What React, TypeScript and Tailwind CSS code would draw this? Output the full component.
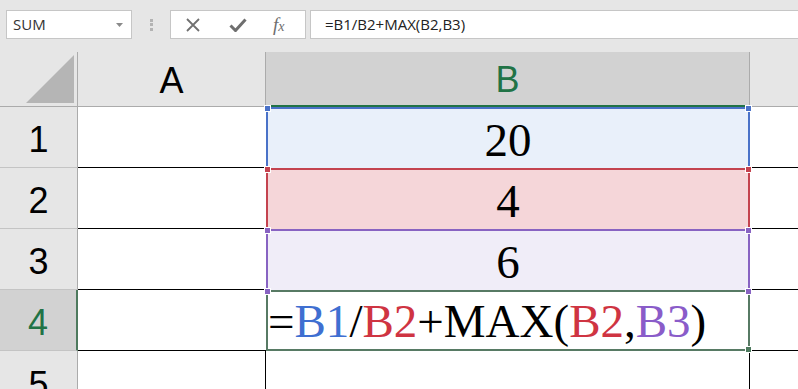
import React from 'react';

const sans = { fontFamily: '"Liberation Sans", Arial, sans-serif' };
const ui = { fontFamily: '"Open Sans", "Noto Sans", sans-serif' };
const serif = { fontFamily: '"Liberation Serif", "Times New Roman", serif' };

const Handle = ({ color, pos }: { color: string; pos: string }) => (
  <span className={`absolute z-10 w-[7px] h-[7px] border border-white ${color} ${pos}`} />
);

const RowHeader = ({ n, active }: { n: string; active?: boolean }) => (
  <div
    className={`h-[61px] flex items-center justify-center pt-[6px] text-[36px] border-b border-[#c4c4c4] ${
      active ? 'bg-[#d2d2d2] text-[#217346] border-r-2 border-r-[#4e7a5e]' : 'bg-[#e6e6e6] text-black border-r border-r-[#ababab]'
    }`}
    style={sans}
  >
    {n}
  </div>
);

const App = () => {
  return (
    <div className="w-[798px] h-[389px] overflow-hidden bg-[#e6e6e6] flex flex-col">
      {/* formula bar */}
      <div className="h-[52px] shrink-0 flex items-start pt-[10px] pl-[6px]" style={ui}>
        <div className="w-[126px] h-[29px] bg-white border border-[#c6c6c6] flex items-center justify-between pl-[6px] pr-[8px]">
          <span className="text-[15px] text-[#333]">SUM</span>
          <svg width="7" height="4" viewBox="0 0 7 4">
            <path d="M0 0 L7 0 L3.5 4 Z" fill="#8a8a8a" />
          </svg>
        </div>
        <div className="w-[38px] h-[29px] flex flex-col items-center justify-center gap-[1.5px]">
          <span className="w-[3px] h-[3px] bg-[#b3b3b3]" />
          <span className="w-[3px] h-[3px] bg-[#b3b3b3]" />
          <span className="w-[3px] h-[3px] bg-[#b3b3b3]" />
        </div>
        <div className="w-[136px] h-[29px] bg-white border border-[#c6c6c6] flex items-center pl-[14px] gap-[0px]">
          <svg width="16" height="14" viewBox="0 0 16 14" className="mr-[28px]">
            <path d="M2 1 L14 13 M14 1 L2 13" stroke="#707070" strokeWidth="1.8" fill="none" />
          </svg>
          <svg width="18" height="14" viewBox="0 0 18 14" className="mr-[26px]">
            <path d="M1.5 7.5 L6.5 12.5 L16.5 1.5" stroke="#6e6e6e" strokeWidth="3" fill="none" />
          </svg>
          <span className="italic text-[19px] leading-none text-[#6e6e6e]" style={serif}>
            f<span className="text-[14px]">x</span>
          </span>
        </div>
        <div className="ml-[4px] flex-1 h-[29px] bg-white border-y border-l border-[#c6c6c6] flex items-center pl-[14px]">
          <span className="text-[15px] text-[#222]">=B1/B2+MAX(B2,B3)</span>
        </div>
      </div>

      {/* sheet */}
      <div className="grid grid-cols-[78px_188px_484px_48px]">
        {/* headers */}
        <div className="h-[55px] border-r border-b border-[#ababab] flex items-end justify-end pr-[3px] pb-[3px]">
          <svg width="48" height="48" viewBox="0 0 48 48">
            <path d="M0 48 L48 0 L48 48 Z" fill="#b5b5b5" />
          </svg>
        </div>
        <div className="h-[55px] border-r border-b border-[#ababab] flex items-center justify-center pt-[3px] text-[36px]" style={sans}>
          A
        </div>
        <div className="h-[55px] bg-[#d2d2d2] border-r border-r-[#ababab] border-b-2 border-b-[#217346] flex items-center justify-center pt-[3px] text-[36px] text-[#217346]" style={sans}>
          B
        </div>
        <div className="h-[55px] border-b border-[#ababab]" />

        {/* row 1 */}
        <RowHeader n="1" />
        <div className="h-[61px] bg-white border-b border-black" />
        <div className="relative h-[61px] bg-[#e9f0fa] border-x-2 border-t-2 border-[#4a72c8] flex items-center justify-center pt-[4px] text-[47px]" style={serif}>
          <Handle color="bg-[#4a72c8]" pos="-top-[4px] -left-[4px]" />
          <Handle color="bg-[#4a72c8]" pos="-top-[4px] -right-[4px]" />
          20
        </div>
        <div className="h-[61px] bg-white border-b border-black" />

        {/* row 2 */}
        <RowHeader n="2" />
        <div className="h-[61px] bg-white border-b border-black" />
        <div className="relative h-[61px] bg-[#f5d6d9] border-x-2 border-t-2 border-[#c4434f] flex items-center justify-center pt-[4px] text-[47px]" style={serif}>
          <Handle color="bg-[#c4434f]" pos="-top-[4px] -left-[4px]" />
          <Handle color="bg-[#c4434f]" pos="-top-[4px] -right-[4px]" />
          4
        </div>
        <div className="h-[61px] bg-white border-b border-black" />

        {/* row 3 */}
        <RowHeader n="3" />
        <div className="h-[61px] bg-white border-b border-black" />
        <div className="relative h-[61px] bg-[#f0edf8] border-x-2 border-t-2 border-[#8863c2] flex items-center justify-center pt-[4px] text-[47px]" style={serif}>
          <Handle color="bg-[#8863c2]" pos="-top-[4px] -left-[4px]" />
          <Handle color="bg-[#8863c2]" pos="-top-[4px] -right-[4px]" />
          6
        </div>
        <div className="h-[61px] bg-white border-b border-black" />

        {/* row 4 */}
        <RowHeader n="4" active />
        <div className="h-[61px] bg-white border-b border-black" />
        <div className="relative h-[61px] bg-white border-2 border-[#577a64] flex items-center pt-[2px] text-[47px] whitespace-nowrap" style={serif}>
          <Handle color="bg-[#8863c2]" pos="-top-[4px] -left-[4px]" />
          <Handle color="bg-[#8863c2]" pos="-top-[4px] -right-[4px]" />
          <Handle color="bg-[#4e7a5e]" pos="-bottom-[4px] -right-[4px]" />
          <span>=</span>
          <span className="text-[#3f6fd1]">B1</span>
          <span>/</span>
          <span className="text-[#cf3442]">B2</span>
          <span>+MAX(</span>
          <span className="text-[#cf3442]">B2</span>
          <span>,</span>
          <span className="text-[#8a5cc9]">B3</span>
          <span>)</span>
        </div>
        <div className="h-[61px] bg-white border-b border-black" />

        {/* row 5 */}
        <div className="h-[61px] flex items-center justify-center pt-[6px] text-[36px] bg-[#e6e6e6] border-r border-[#ababab]" style={sans}>
          5
        </div>
        <div className="h-[61px] bg-white border-r border-black" />
        <div className="h-[61px] bg-white border-r border-black" />
        <div className="h-[61px] bg-white" />
      </div>
    </div>
  );
};

export default App;
